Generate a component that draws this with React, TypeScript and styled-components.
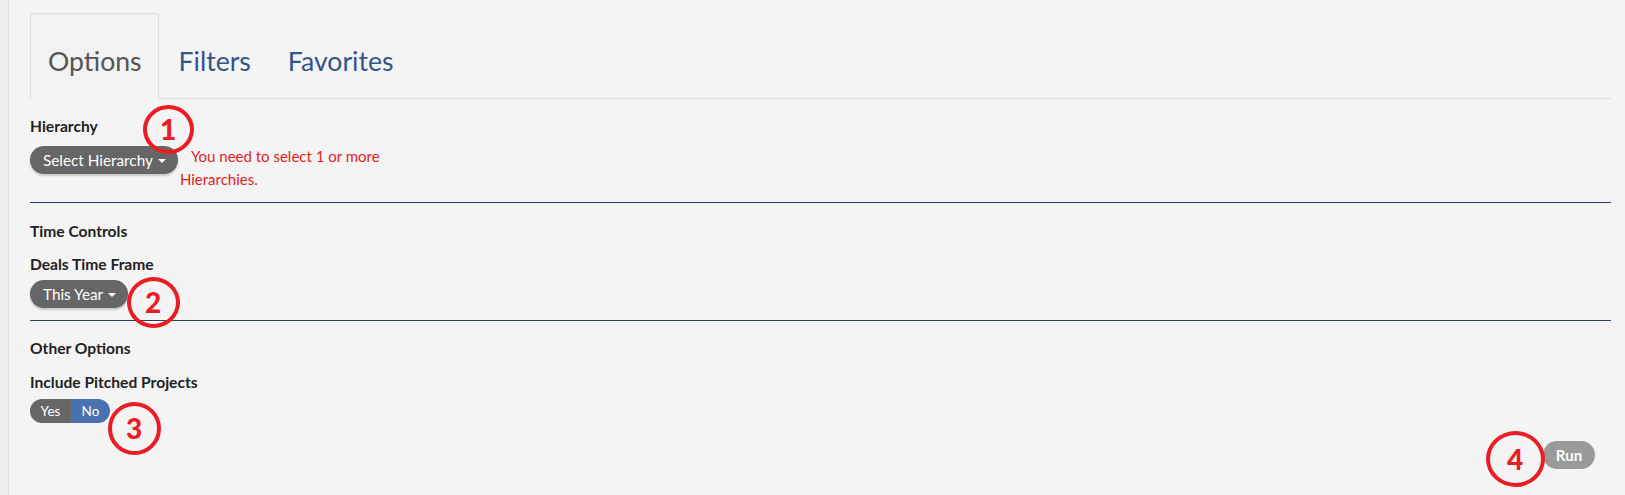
import React from "react";
import styled, { createGlobalStyle } from "styled-components";

const Global = createGlobalStyle`
  html, body { margin: 0; padding: 0; background: #efefef; }
  body { font-family: Lato, "Open Sans", sans-serif; }
  * { box-sizing: border-box; }
`;

const Page = styled.div`
  position: relative;
  width: 1625px;
  height: 495px;
  padding-left: 8px;
  overflow: hidden;
`;

const Panel = styled.div`
  height: 100%;
  background: #f4f4f4;
  border-left: 1px solid #dedede;
  padding: 13px 14px 0 21px;
  display: flex;
  flex-direction: column;
`;

const TabBar = styled.div`
  display: flex;
  border-bottom: 1px solid #dddddd;
`;

const Tab = styled.div<{ $active?: boolean }>`
  margin-right: 2px;
  margin-bottom: -1px;
  padding: 32px 16px 21px 17px;
  font-size: 26.6px;
  line-height: 31px;
  color: ${(p) => (p.$active ? "#555555" : "#34548a")};
  border: 1px solid ${(p) => (p.$active ? "#dddddd" : "transparent")};
  border-bottom-color: ${(p) => (p.$active ? "#f2f2f2" : "transparent")};
  background: ${(p) => (p.$active ? "#f2f2f2" : "transparent")};
  border-radius: 4px 4px 0 0;
`;

const Section = styled.div<{ $top: number }>`
  padding-top: ${(p) => p.$top}px;
`;

const Label = styled.div<{ $gap: number }>`
  font-size: 15.6px;
  line-height: 20px;
  font-weight: 700;
  color: #222222;
  margin-bottom: ${(p) => p.$gap}px;
`;

const Row = styled.div`
  display: flex;
  align-items: flex-start;
`;

const Dropdown = styled.button`
  display: inline-flex;
  align-items: center;
  height: 28px;
  padding: 0 12px 0 13px;
  border: none;
  border-radius: 14px;
  background: #666666;
  color: #ffffff;
  font-family: Lato, sans-serif;
  font-size: 15.3px;
  box-shadow: 0 2px 2px rgba(0, 0, 0, 0.18);
  cursor: pointer;
`;

const Caret = styled.span`
  display: inline-block;
  width: 0;
  height: 0;
  margin-left: 5px;
  margin-top: 2px;
  border-top: 4px solid #ffffff;
  border-left: 4px solid transparent;
  border-right: 4px solid transparent;
`;

const ErrorText = styled.div`
  width: 205px;
  margin-left: 2px;
  text-indent: 11px;
  font-size: 15px;
  line-height: 23px;
  margin-top: -1px;
  color: #e21d25;
`;

const Divider = styled.hr<{ $top: number }>`
  margin: ${(p) => p.$top}px 0 0;
  border: none;
  border-top: 1px solid #2b3f64;
  height: 0;
`;

const Toggle = styled.div`
  display: inline-flex;
  height: 24px;
  border-radius: 12px;
  overflow: hidden;
  align-self: flex-start;
`;

const ToggleSeg = styled.span<{ $on?: boolean; $w: number }>`
  width: ${(p) => p.$w}px;
  display: flex;
  align-items: center;
  justify-content: center;
  font-size: 13.5px;
  color: #ffffff;
  background: ${(p) => (p.$on ? "#4a72b0" : "#666666")};
`;

const Footer = styled.div`
  display: flex;
  justify-content: flex-end;
  padding-right: 16px;
  margin-top: 18px;
`;

const RunButton = styled.button`
  width: 52px;
  height: 28px;
  border: none;
  border-radius: 14px;
  background: #9a9a9a;
  color: #ffffff;
  font-family: Lato, sans-serif;
  font-weight: 700;
  font-size: 15px;
  cursor: pointer;
`;

const Marker = styled.div<{ $x: number; $y: number; $w: number; $h: number }>`
  position: absolute;
  left: ${(p) => p.$x - p.$w / 2}px;
  top: ${(p) => p.$y - p.$h / 2}px;
  width: ${(p) => p.$w}px;
  height: ${(p) => p.$h}px;
  border: 4px solid #ea1c24;
  border-radius: 50%;
  display: flex;
  align-items: center;
  justify-content: center;
  color: #ea1c24;
  font-family: Lato, sans-serif;
  font-weight: 900;
  font-size: 28px;
  line-height: 1;
`;

export default function App() {
  return (
    <Page>
      <Global />
      <Panel>
        <TabBar>
          <Tab $active>Options</Tab>
          <Tab>Filters</Tab>
          <Tab>Favorites</Tab>
        </TabBar>

        <Section $top={17}>
          <Label $gap={10}>Hierarchy</Label>
          <Row>
            <Dropdown>
              Select Hierarchy
              <Caret />
            </Dropdown>
            <ErrorText>You need to select 1 or more Hierarchies.</ErrorText>
          </Row>
        </Section>
        <Divider $top={11} />

        <Section $top={18}>
          <Label $gap={13}>Time Controls</Label>
          <Label $gap={6}>Deals Time Frame</Label>
          <Row>
            <Dropdown>
              This Year
              <Caret />
            </Dropdown>
          </Row>
        </Section>
        <Divider $top={12} />

        <Section $top={17}>
          <Label $gap={14}>Other Options</Label>
          <Label $gap={7}>Include Pitched Projects</Label>
          <Toggle>
            <ToggleSeg $w={41}>Yes</ToggleSeg>
            <ToggleSeg $w={39} $on>
              No
            </ToggleSeg>
          </Toggle>
        </Section>

        <Footer>
          <RunButton>Run</RunButton>
        </Footer>
      </Panel>

      <Marker $x={168} $y={129} $w={51} $h={49}>1</Marker>
      <Marker $x={153} $y={302} $w={53} $h={51}>2</Marker>
      <Marker $x={134} $y={428} $w={53} $h={53}>3</Marker>
      <Marker $x={1515} $y={459} $w={59} $h={56}>4</Marker>
    </Page>
  );
}
